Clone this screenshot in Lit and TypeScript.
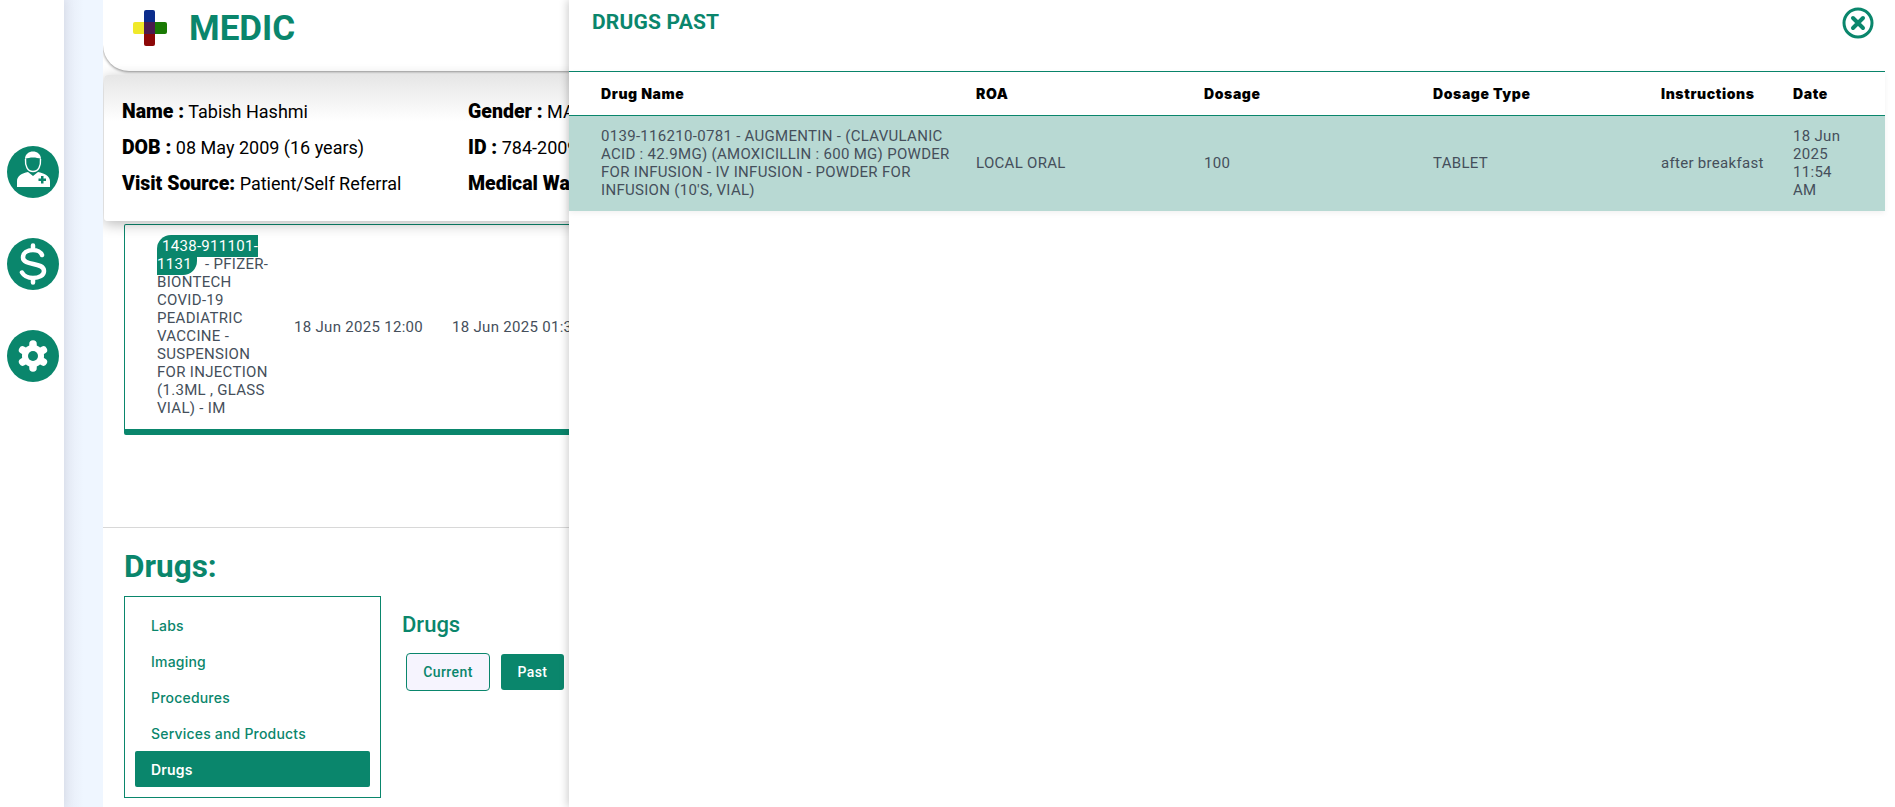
import { LitElement, html, css } from "lit";
import { customElement } from "lit/decorators.js";

const TEAL = "#0a866c";

@customElement("app-root")
export class AppRoot extends LitElement {
  static styles = css`
    :host { --teal: #0a866c; display: block; height: 807px; position: relative; overflow: hidden; background: #fff; font-family: Roboto, sans-serif; color: #000; }
    * { box-sizing: border-box; }
    .page { display: flex; height: 807px; }
    .rail { width: 64px; flex: none; display: flex; flex-direction: column; gap: 40px; padding: 146px 0 0 7px; background: #fff; box-shadow: 2px 0 10px rgba(0,0,0,.06); position: relative; }
    .rail svg { width: 52px; height: 52px; display: block; }
    .gutter { width: 39px; flex: none; background: linear-gradient(90deg, #e6ebf6, #eff6ff 50%); }
    .main { flex: 1; background: #fff; min-width: 0; overflow: hidden; }
    .brand { height: 71px; border-radius: 0 0 0 26px; box-shadow: 0 1px 3px rgba(0,0,0,.45); display: flex; align-items: center; gap: 22px; padding: 0 0 15px 30px; background: #fff; position: relative; }
    .brand svg { width: 34px; height: 36px; }
    .brand span { color: var(--teal); font-size: 35px; font-weight: 700; }
    .card { height: 146px; margin: 4px 0 0 1px; background: linear-gradient(#e6e6e6, #fff 32%); border-radius: 4px; padding: 19px 0 0 18px; display: grid; grid-template-columns: 346px 1fr; grid-auto-rows: 36px; font-size: 18px; line-height: 36px; white-space: nowrap; box-shadow: 0 3px 14px rgba(0,0,0,.28); position: relative; }
    .card b { font-weight: 900; font-size: 19.5px; }
    .vaccine { margin: 3px 0 0 21px; height: 211px; border: 1px solid var(--teal); border-bottom: 6px solid var(--teal); border-radius: 2px; display: flex; align-items: center; font-size: 15px; letter-spacing: .3px; line-height: 18px; color: #454f5b; white-space: nowrap; padding-left: 32px; }
    .vname { width: 114px; white-space: normal; flex: none; }
    .code { background: var(--teal); color: #fff; border-radius: 14px 0 14px 0; padding: 2px 5px; }
    .t1 { margin-left: 23px; width: 158px; flex: none; }
    .rule { height: 1px; background: #d8d8d8; margin-top: 92px; }
    .drugs { padding: 21px 0 0 21px; }
    h2 { margin: 0; color: var(--teal); font-size: 31.5px; line-height: 36px; font-weight: 700; }
    .cols { display: flex; margin-top: 11px; }
    .nav { width: 257px; height: 202px; border: 1px solid var(--teal); padding: 10px; display: flex; flex-direction: column; font-family: Inter, sans-serif; }
    .nav div { height: 36px; flex: none; display: flex; align-items: center; padding-left: 16px; font-size: 14px; font-weight: 500; color: var(--teal); border-radius: 2px; letter-spacing: .2px; }
    .nav .on { background: var(--teal); color: #fff; font-weight: 600; }
    .side { padding: 14px 0 0 21px; }
    h3 { margin: 0; color: var(--teal); font-size: 22px; line-height: 30px; font-weight: 500; }
    .btns { display: flex; gap: 11px; margin: 13px 0 0 4px; align-items: center; }
    .btn { height: 36px; display: flex; align-items: center; justify-content: center; font-size: 14px; font-weight: 500; border-radius: 3px; letter-spacing: .4px; }
    .btn.cur { width: 84px; height: 38px; border: 1px solid var(--teal); background: #f6f4fe; color: var(--teal); border-radius: 4px; }
    .btn.past { width: 63px; background: var(--teal); color: #fff; }
    .modal { position: absolute; left: 569px; top: 0; right: 0; bottom: 0; background: #fff; box-shadow: -2px 0 8px rgba(0,0,0,.18); padding-right: 10px; }
    .mhead { height: 72px; border-bottom: 1px solid var(--teal); padding: 10px 11px 0 23px; display: flex; justify-content: space-between; align-items: flex-start; }
    .mhead span { color: var(--teal); font-size: 21px; line-height: 24px; font-weight: 700; letter-spacing: .2px; }
    .mhead svg { width: 32px; height: 32px; display: block; margin-top: -3px; }
    table { border-collapse: collapse; width: 100%; table-layout: fixed; box-shadow: 0 2px 6px rgba(0,0,0,.06); }
    th { height: 43px; padding: 0 0 0 12px; text-align: left; font-family: Inter, sans-serif; font-size: 14px; font-weight: 900; color: #000; letter-spacing: .6px; border-bottom: 1px solid var(--teal); }
    td { height: 96px; padding: 0 12px; font-size: 15px; line-height: 18px; color: #454f5b; background: #b8d9d3; letter-spacing: .3px; }
    th:first-child, td:first-child { padding-left: 32px; }
    td:last-child { padding-right: 32px; }
    .c1 { width: 395px; } .c2 { width: 228px; } .c3 { width: 229px; } .c4 { width: 228px; } .c5 { width: 132px; }
  `;

  render() {
    return html`
      <div class="page">
        <div class="rail">
          <svg viewBox="0 0 52 52"><circle cx="26" cy="26" r="26" fill="${TEAL}"/><path fill="#fff" d="M10 41v-6c0-5 5-8 11-9l5 4 5-4c6 1 12 4 12 9v6z"/><path fill="none" stroke="#fff" stroke-width="1.4" d="M18.500 13c-.5 7 2 12.500 7.500 12.500s8-5.500 7.500-12.500"/><path fill="#fff" d="M18 13c0-5 4-7.500 8-7.500s8 2.500 8 7.500c-5-2-11-2-16 0z"/><path fill="${TEAL}" d="M34 30h2.500v2.500h2.500v2.500h-2.500v2.500h-2.500v-2.500h-2.500v-2.500h2.500z"/></svg>
          <svg viewBox="0 0 52 52"><circle cx="26" cy="26" r="26" fill="${TEAL}"/><path fill="none" stroke="#fff" stroke-width="4.500" stroke-linecap="round" stroke-linejoin="round" d="M35 17c-1-3-5-5-9-5-6 0-10 3-10 7.500 0 9 21 4 21 13.500 0 4.500-5 7-11 7-5 0-9-2-11-5.500M26 7.500v4M26 40v4.500"/></svg>
          <svg viewBox="0 0 52 52"><circle cx="26" cy="26" r="26" fill="${TEAL}"/><circle cx="26" cy="26" r="11" fill="#fff"/><path stroke="#fff" stroke-width="7.500" stroke-linecap="round" d="M26 14v24M15.600 20l20.800 12M36.400 20l-20.800 12"/><circle cx="26" cy="26" r="5" fill="${TEAL}"/></svg>
        </div>
        <div class="gutter"></div>
        <div class="main">
          <div class="brand">
            <svg viewBox="0 0 34 36"><rect x="0" y="12" width="14" height="12" rx="2" fill="#f0e92a"/><rect x="20" y="12" width="14" height="12" rx="2" fill="#1a7a04"/><rect x="11" y="0" width="11" height="14" rx="2" fill="#0b2c8c"/><rect x="11" y="22" width="11" height="14" rx="2" fill="#8c0808"/><rect x="11" y="12" width="11" height="12" fill="#4a1a4e"/></svg>
            <span>MEDIC</span>
          </div>
          <div class="card">
            <div><b>Name :</b> Tabish Hashmi</div><div><b>Gender :</b> MALE</div>
            <div><b>DOB :</b> 08 May 2009 (16 years)</div><div><b>ID :</b> 784-2009</div>
            <div><b>Visit Source:</b> Patient/Self Referral</div><div><b>Medical Ward</b></div>
          </div>
          <div class="vaccine">
            <div class="vname"><span class="code">1438-911101-1131</span> &nbsp;- PFIZER-BIONTECH COVID-19 PEADIATRIC VACCINE - SUSPENSION FOR INJECTION (1.3ML , GLASS VIAL) - IM</div>
            <div class="t1">18 Jun 2025 12:00</div>
            <div>18 Jun 2025 01:30</div>
          </div>
          <div class="rule"></div>
          <div class="drugs">
            <h2>Drugs:</h2>
            <div class="cols">
              <div class="nav"><div>Labs</div><div>Imaging</div><div>Procedures</div><div>Services and Products</div><div class="on">Drugs</div></div>
              <div class="side"><h3>Drugs</h3>
                <div class="btns"><div class="btn cur">Current</div><div class="btn past">Past</div></div>
              </div>
            </div>
          </div>
        </div>
      </div>
      <div class="modal">
        <div class="mhead"><span>DRUGS PAST</span>
          <svg viewBox="0 0 32 32"><circle cx="16" cy="16" r="14" fill="none" stroke="${TEAL}" stroke-width="3"/><path stroke="${TEAL}" stroke-width="4" stroke-linecap="round" d="M11 11l10 10M21 11l-10 10"/></svg>
        </div>
        <table>
          <colgroup><col class="c1"/><col class="c2"/><col class="c3"/><col class="c4"/><col class="c5"/><col/></colgroup>
          <thead><tr><th>Drug Name</th><th>ROA</th><th>Dosage</th><th>Dosage Type</th><th>Instructions</th><th>Date</th></tr></thead>
          <tbody><tr>
            <td>0139-116210-0781 - AUGMENTIN - (CLAVULANIC ACID : 42.9MG) (AMOXICILLIN : 600 MG) POWDER FOR INFUSION - IV INFUSION - POWDER FOR INFUSION (10'S, VIAL)</td>
            <td>LOCAL ORAL</td><td>100</td><td>TABLET</td><td>after breakfast</td><td>18 Jun 2025 11:54 AM</td>
          </tr></tbody>
        </table>
      </div>
    `;
  }
}
